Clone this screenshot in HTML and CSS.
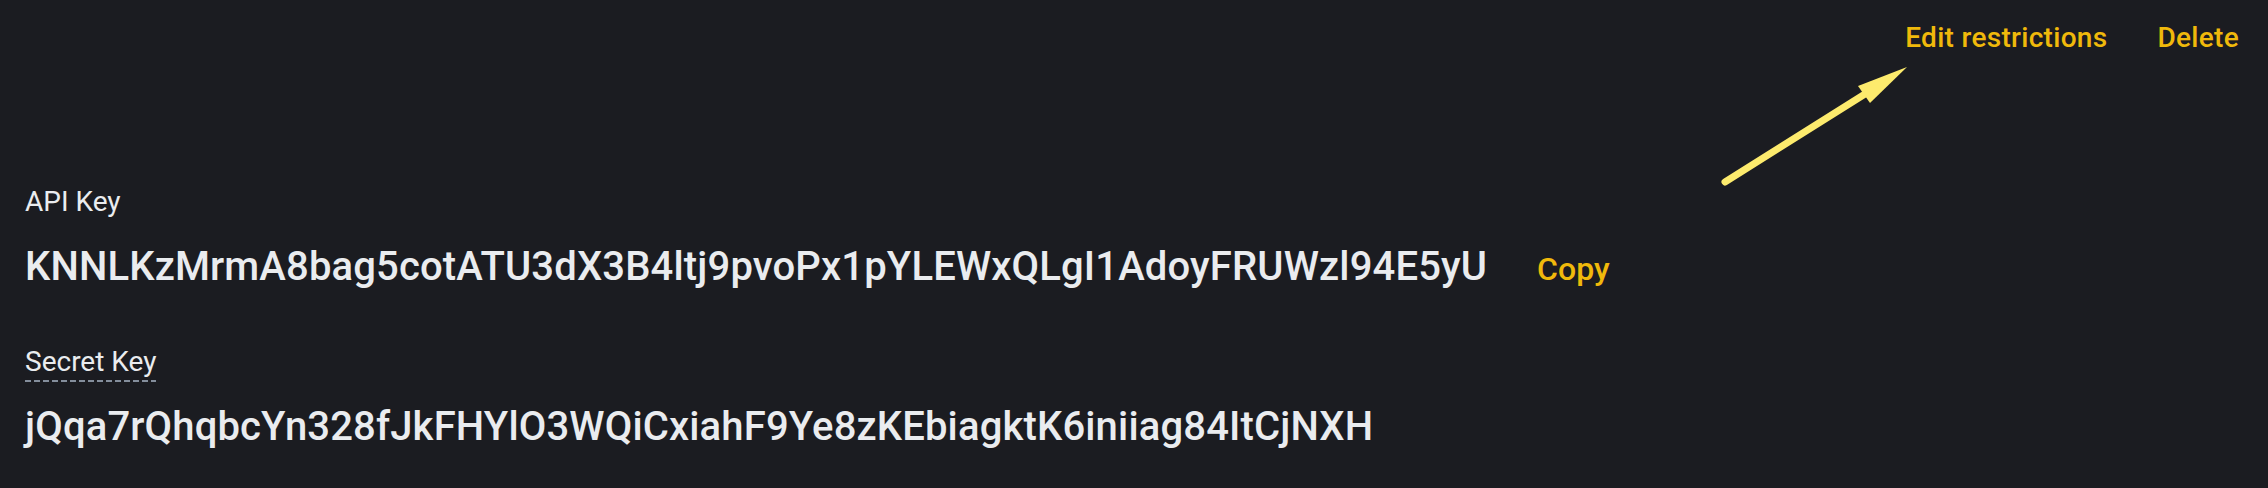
FILE: index.html
```html
<!DOCTYPE html>
<html lang="en">
<head>
    <meta charset="UTF-8">
    <meta name="viewport" content="width=device-width, initial-scale=1.0">
    <title>API Management</title>
    <link rel="stylesheet" href="styles.css">
</head>
<body>
    <div class="page">
        <div class="actions">
            <a class="action" href="#">Edit restrictions</a>
            <a class="action" href="#">Delete</a>
        </div>

        <svg class="pointer" width="200" height="132" viewBox="0 0 200 132">
            <line x1="10" y1="122" x2="150" y2="34" stroke="#fdeb6d" stroke-width="7" stroke-linecap="round"/>
            <polygon points="192,7 143,26 155,43" fill="#fdeb6d"/>
        </svg>

        <div class="field">
            <div class="field-label"><span>API Key</span></div>
            <div class="field-row">
                <span class="field-value">KNNLKzMrmA8bag5cotATU3dX3B4ltj9pvoPx1pYLEWxQLgI1AdoyFRUWzl94E5yU</span>
                <a class="copy" href="#">Copy</a>
            </div>
        </div>

        <div class="field">
            <div class="field-label"><span class="dashed">Secret Key</span></div>
            <div class="field-row">
                <span class="field-value">jQqa7rQhqbcYn328fJkFHYlO3WQiCxiahF9Ye8zKEbiagktK6iniiag84ItCjNXH</span>
            </div>
        </div>
    </div>
</body>
</html>
```

FILE: styles.css
```css
body {
    margin: 0;
    padding: 0;
    background-color: #1b1c21;
    font-family: Roboto, "Liberation Sans", Arial, sans-serif;
    color: #eaecef;
}
.page {
    position: relative;
    height: 488px;
    padding: 18px 29px 0 25px;
    box-sizing: border-box;
}
.actions {
    display: flex;
    justify-content: flex-end;
    gap: 50px;
    margin-bottom: 124px;
}
.action {
    font-size: 28px;
    line-height: 40px;
    font-weight: 500;
    letter-spacing: 0.3px;
    color: #f0b90b;
    text-decoration: none;
}
.pointer {
    position: absolute;
    top: 60px;
    right: 353px;
}
.field {
    margin-bottom: 47px;
}
.field-label {
    font-size: 28px;
    line-height: 40px;
    margin-bottom: 17px;
}
.field-label .dashed {
    display: inline-block;
    background: linear-gradient(to right, #848e9c 65%, transparent 0) left bottom / 9px 2px repeat-x;
}
.field-row {
    display: flex;
    align-items: baseline;
    gap: 50px;
}
.field-value {
    font-size: 40px;
    line-height: 56px;
    font-weight: 500;
    letter-spacing: 0.15px;
}
.copy {
    font-size: 32px;
    font-weight: 500;
    color: #f0b90b;
    text-decoration: none;
}
```
